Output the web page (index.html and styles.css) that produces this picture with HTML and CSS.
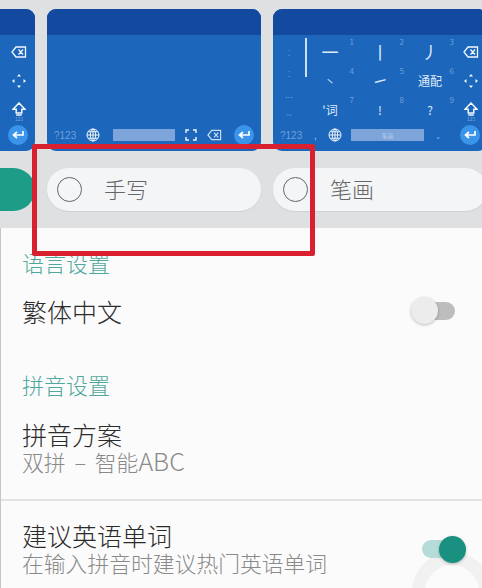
FILE: index.html
```html
<html>
<head>
	<meta charset="utf-8">
	<link rel="stylesheet" href="styles.css">
</head>
<body>
<svg class="icon_defs" aria-hidden="true">
	<symbol id="icon_delete" viewBox="0 0 16 12"><path d="M5 1h9.5v10H5L1 6z M7.5 3.5l4.5 5 M12 3.5l-4.5 5" fill="none" stroke="currentColor" stroke-width="1.3"/></symbol>
	<symbol id="icon_move" viewBox="0 0 14 14"><path d="M7 0l2 2.5H5z M7 14l-2-2.500h4z M0 7l2.500-2v4z M14 7l-2.500 2V5z" fill="currentColor"/></symbol>
	<symbol id="icon_shift" viewBox="0 0 14 14"><path d="M7 1l6 6.200H9.800V11H4.200V7.200H1z M4.200 13h5.600" fill="none" stroke="currentColor" stroke-width="1.500"/></symbol>
	<symbol id="icon_enter" viewBox="0 0 12 10"><path d="M11 1v4H2 M5 2L1.500 5 5 8" fill="none" stroke="currentColor" stroke-width="1.700"/></symbol>
	<symbol id="icon_globe" viewBox="0 0 14 14"><g fill="none" stroke="currentColor" stroke-width="1"><circle cx="7" cy="7" r="6"/><ellipse cx="7" cy="7" rx="2.700" ry="6"/><path d="M7 1v12M1 7h12M2 3.800h10M2 10.200h10"/></g></symbol>
	<symbol id="icon_full" viewBox="0 0 12 12"><path d="M1 4V1h3 M8 1h3v3 M11 8v3H8 M4 11H1V8" fill="none" stroke="currentColor" stroke-width="1.400"/></symbol>
</svg>

<div class="top_band">
	<div class="gallery">
		<div class="option">
			<div class="keyboard">
				<div class="keyboard_bar"></div>
				<div class="keyboard_body">
					<div class="symbols"></div>
					<div class="key_grid"></div>
					<div class="side_keys">
						<svg class="side_icon side_delete"><use href="#icon_delete"/></svg>
						<svg class="side_icon"><use href="#icon_move"/></svg>
						<span class="shift_key"><svg class="side_icon"><use href="#icon_shift"/></svg><small>123</small></span>
					</div>
				</div>
				<div class="keyboard_foot foot_end">
					<span class="enter_key"><svg><use href="#icon_enter"/></svg></span>
				</div>
			</div>
			<div class="pill pill_selected"></div>
		</div>

		<div class="option">
			<div class="keyboard">
				<div class="keyboard_bar"></div>
				<div class="keyboard_body"></div>
				<div class="keyboard_foot">
					<span class="num_key">?123</span>
					<svg class="foot_icon globe_handwrite"><use href="#icon_globe"/></svg>
					<span class="space_key space_handwrite"></span>
					<svg class="foot_icon full_key"><use href="#icon_full"/></svg>
					<svg class="foot_icon delete_key"><use href="#icon_delete"/></svg>
					<span class="enter_key"><svg><use href="#icon_enter"/></svg></span>
				</div>
			</div>
			<div class="pill">
				<span class="radio"></span>
				<span class="pill_label">手写</span>
			</div>
		</div>

		<div class="option">
			<div class="keyboard">
				<div class="keyboard_bar"></div>
				<div class="keyboard_body">
					<div class="symbols">
						<span>:</span>
						<span>:</span>
						<span>...</span>
						<span>~</span>
					</div>
					<div class="divider"></div>
					<div class="key_grid">
						<span class="key">一<i class="digit">1</i></span>
						<span class="key">丨<i class="digit">2</i></span>
						<span class="key">丿<i class="digit">3</i></span>
						<span class="key key_tick">丶<i class="digit">4</i></span>
						<span class="key">㇀<i class="digit">5</i></span>
						<span class="key key_small">通配<i class="digit">6</i></span>
						<span class="key key_small">'词<i class="digit">7</i></span>
						<span class="key key_small">!<i class="digit">8</i></span>
						<span class="key key_small">?<i class="digit">9</i></span>
					</div>
					<div class="side_keys">
						<svg class="side_icon side_delete"><use href="#icon_delete"/></svg>
						<svg class="side_icon"><use href="#icon_move"/></svg>
						<span class="shift_key"><svg class="side_icon"><use href="#icon_shift"/></svg><small>123</small></span>
					</div>
				</div>
				<div class="keyboard_foot">
					<span class="num_key">?123</span>
					<span class="punct_key comma_key">,</span>
					<svg class="foot_icon globe_stroke"><use href="#icon_globe"/></svg>
					<span class="space_key space_stroke">笔画</span>
					<span class="punct_key period_key">。</span>
					<span class="enter_key"><svg><use href="#icon_enter"/></svg></span>
				</div>
			</div>
			<div class="pill">
				<span class="radio"></span>
				<span class="pill_label">笔画</span>
			</div>
		</div>
	</div>
</div>

<div class="settings">
	<div class="section_title first_title">语言设置</div>
	<div class="setting_row row_traditional">
		<div class="setting_title">繁体中文</div>
		<span class="toggle"><span class="toggle_track"></span><span class="toggle_knob"></span></span>
	</div>

	<div class="section_title second_title">拼音设置</div>
	<div class="setting_row row_scheme">
		<div>
			<div class="setting_title">拼音方案</div>
			<div class="setting_sub scheme_value">双拼 – 智能<span class="latin_value">ABC</span></div>
		</div>
	</div>

	<div class="setting_row row_english">
		<div>
			<div class="setting_title">建议英语单词</div>
			<div class="setting_sub">在输入拼音时建议热门英语单词</div>
		</div>
		<span class="toggle toggle_on"><span class="toggle_track"></span><span class="toggle_knob"></span></span>
	</div>
</div>

<div class="red_mark"></div>
</body>
</html>
```

FILE: styles.css
```css
/*
	keyboard:
	- bar 	#134a9f
	- main 	#1c66bb
	- enter #3a95ea
*/
html {
	background: #fbfbfb;
}

body {
	position: relative;
	margin: 0;
	padding: 0;
	width: 482px;
	height: 588px;
	font-family: "Noto Sans CJK SC", "Noto Sans", sans-serif;
	font-weight: 300;
}

.icon_defs {
	display: none;
}

/* top part with the keyboard previews */

.top_band {
	height: 228px;
	padding-top: 9px;
	box-sizing: border-box;
	overflow: hidden;
	background: #dfe0e2;
}

.gallery {
	display: flex;
	column-gap: 12px;
	margin-left: -179px;
}

.option {
	display: flex;
	flex-direction: column;
	flex: none;
	row-gap: 17px;
	width: 214px;
}

.keyboard {
	display: flex;
	flex-direction: column;
	height: 142px;
	border-radius: 9px;
	overflow: hidden;
	background: #1c66bb;
	color: #dfeaf8;
}

.keyboard_bar {
	flex: none;
	height: 26px;
	background: #134a9f;
}

.keyboard_body {
	display: flex;
	flex: none;
	height: 89px;
	padding-top: 2px;
	box-sizing: border-box;
}

.symbols {
	display: flex;
	flex-direction: column;
	flex: none;
	width: 32px;
	padding: 7px 0 3px;
	box-sizing: border-box;
	align-items: center;
	justify-content: space-between;
	font-size: 11px;
	line-height: 14px;
	color: #6f9fd9;
}

.divider {
	flex: none;
	width: 2px;
	height: 39px;
	margin: 1px -2px 0 0;
	background: #cfe0f5;
}

.key_grid {
	display: grid;
	flex: none;
	grid-template-columns: repeat(3, 50px);
	grid-template-rows: repeat(3, 29px);
	width: 150px;
}

.key {
	position: relative;
	display: flex;
	align-items: center;
	justify-content: center;
	font-size: 17px;
	font-weight: 400;
}

.key_small {
	font-size: 12px;
}

.key_tick {
	font-size: 11px;
}

.digit {
	position: absolute;
	top: 0;
	right: 1px;
	font-size: 8px;
	font-style: normal;
	line-height: 10px;
	color: #6f9fd9;
}

.side_keys {
	display: grid;
	flex: none;
	grid-template-rows: repeat(3, 29px);
	justify-items: center;
	align-items: center;
	width: 32px;
	color: #f4f8fd;
}

.side_icon {
	display: block;
	width: 14px;
	height: 14px;
}

.side_delete {
	width: 16px;
	height: 12px;
}

.shift_key {
	display: flex;
	flex-direction: column;
	align-items: center;
	margin-top: 4px;
}

.shift_key small {
	font-size: 5px;
	line-height: 6px;
	color: #a9c8ec;
}

.keyboard_foot {
	display: flex;
	flex: none;
	align-items: center;
	height: 22px;
	padding: 0 7px;
	font-family: "Liberation Sans", sans-serif;
}

.foot_end {
	justify-content: flex-end;
}

.num_key {
	width: 21px;
	font-size: 10px;
	color: #6f9fd9;
	white-space: nowrap;
}

.foot_icon {
	display: block;
	flex: none;
	width: 14px;
	height: 14px;
	color: #eef4fb;
}

.globe_handwrite {
	margin-left: 11px;
}

.globe_stroke {
	margin-left: 8px;
}

.space_key {
	display: flex;
	align-items: center;
	justify-content: center;
	height: 12px;
	background: #7ea5da;
	font-family: "Noto Sans CJK SC", sans-serif;
	font-size: 6px;
	color: #c9dbf2;
}

.space_handwrite {
	width: 62px;
	margin-left: 13px;
}

.space_stroke {
	width: 73px;
	margin-left: 9px;
}

.full_key {
	width: 12px;
	height: 12px;
	margin-left: 10px;
}

.delete_key {
	width: 15px;
	height: 12px;
	margin-left: 10px;
	color: #c9dbf2;
}

.punct_key {
	width: 6px;
	font-size: 10px;
	color: #a9c8ec;
}

.comma_key {
	margin-left: 13px;
}

.period_key {
	margin-left: 12px;
}

.enter_key {
	display: flex;
	flex: none;
	align-items: center;
	justify-content: center;
	width: 20px;
	height: 20px;
	margin-left: auto;
	border-radius: 50%;
	background: #3a95ea;
	color: white;
}

.enter_key svg {
	width: 12px;
	height: 10px;
}

/* radio pills */

.pill {
	display: flex;
	align-items: center;
	height: 43px;
	padding-left: 10px;
	box-sizing: border-box;
	border-radius: 22px;
	background: #f4f5f6;
	box-shadow: 0 1px 1px #cfd0d2;
}

.pill_selected {
	background: #1d9c87;
	box-shadow: none;
}

.radio {
	flex: none;
	width: 23px;
	height: 23px;
	border: 1px solid #666;
	border-radius: 50%;
}

.pill_label {
	margin: 0 0 4px 22px;
	font-size: 22px;
	line-height: 30px;
	color: #666;
}

/* settings list */

.settings {
	position: relative;
	z-index: 0;
	height: 360px;
	padding-top: 19px;
	box-sizing: border-box;
	overflow: hidden;
	border-left: 1px solid #c6c6c6;
}

.section_title {
	padding-left: 21px;
	font-size: 22px;
	line-height: 30px;
	color: #4fa89c;
}

.second_title {
	margin-top: 45px;
}

.setting_row {
	display: flex;
	align-items: center;
	justify-content: space-between;
	padding-left: 21px;
}

.setting_title {
	font-size: 25px;
	line-height: 26px;
	color: #2b2b2b;
}

.setting_sub {
	height: 26px;
	margin-top: 2px;
	font-size: 21.800px;
	line-height: 26px;
	color: #8a8a8a;
}

.scheme_value {
	word-spacing: 4px;
}

.latin_value {
	font-size: 25px;
	line-height: 20px;
}

.row_traditional {
	margin-top: 20px;
	padding-right: 27px;
}

.row_scheme {
	padding-top: 22px;
	padding-bottom: 24px;
	border-bottom: 2px solid #e4e4e4;
}

.row_english {
	padding-top: 21px;
	padding-right: 16px;
}

.toggle {
	position: relative;
	display: flex;
	flex: none;
	align-items: center;
	width: 44px;
	height: 27px;
}

.toggle_track {
	width: 100%;
	height: 18px;
	border-radius: 9px;
	background: #bdbdbd;
}

.toggle_knob {
	position: absolute;
	top: 0;
	left: 0;
	width: 27px;
	height: 27px;
	border-radius: 50%;
	background: #ececec;
	box-shadow: 0 1px 3px #00000040;
}

.toggle_on .toggle_track {
	background: #b5dcd8;
}

.toggle_on .toggle_knob {
	left: 17px;
	background: #1a9080;
}

/* ripple left over round the switch */
.toggle_on::before {
	content: "";
	position: absolute;
	top: 16px;
	left: -10px;
	width: 54px;
	height: 54px;
	border: 13px solid #f1f1f1;
	border-radius: 50%;
	z-index: -1;
}

.red_mark {
	position: absolute;
	top: 144px;
	left: 32px;
	width: 283px;
	height: 112px;
	box-sizing: border-box;
	border: 5px solid #d8202e;
	border-radius: 2px;
}
```
